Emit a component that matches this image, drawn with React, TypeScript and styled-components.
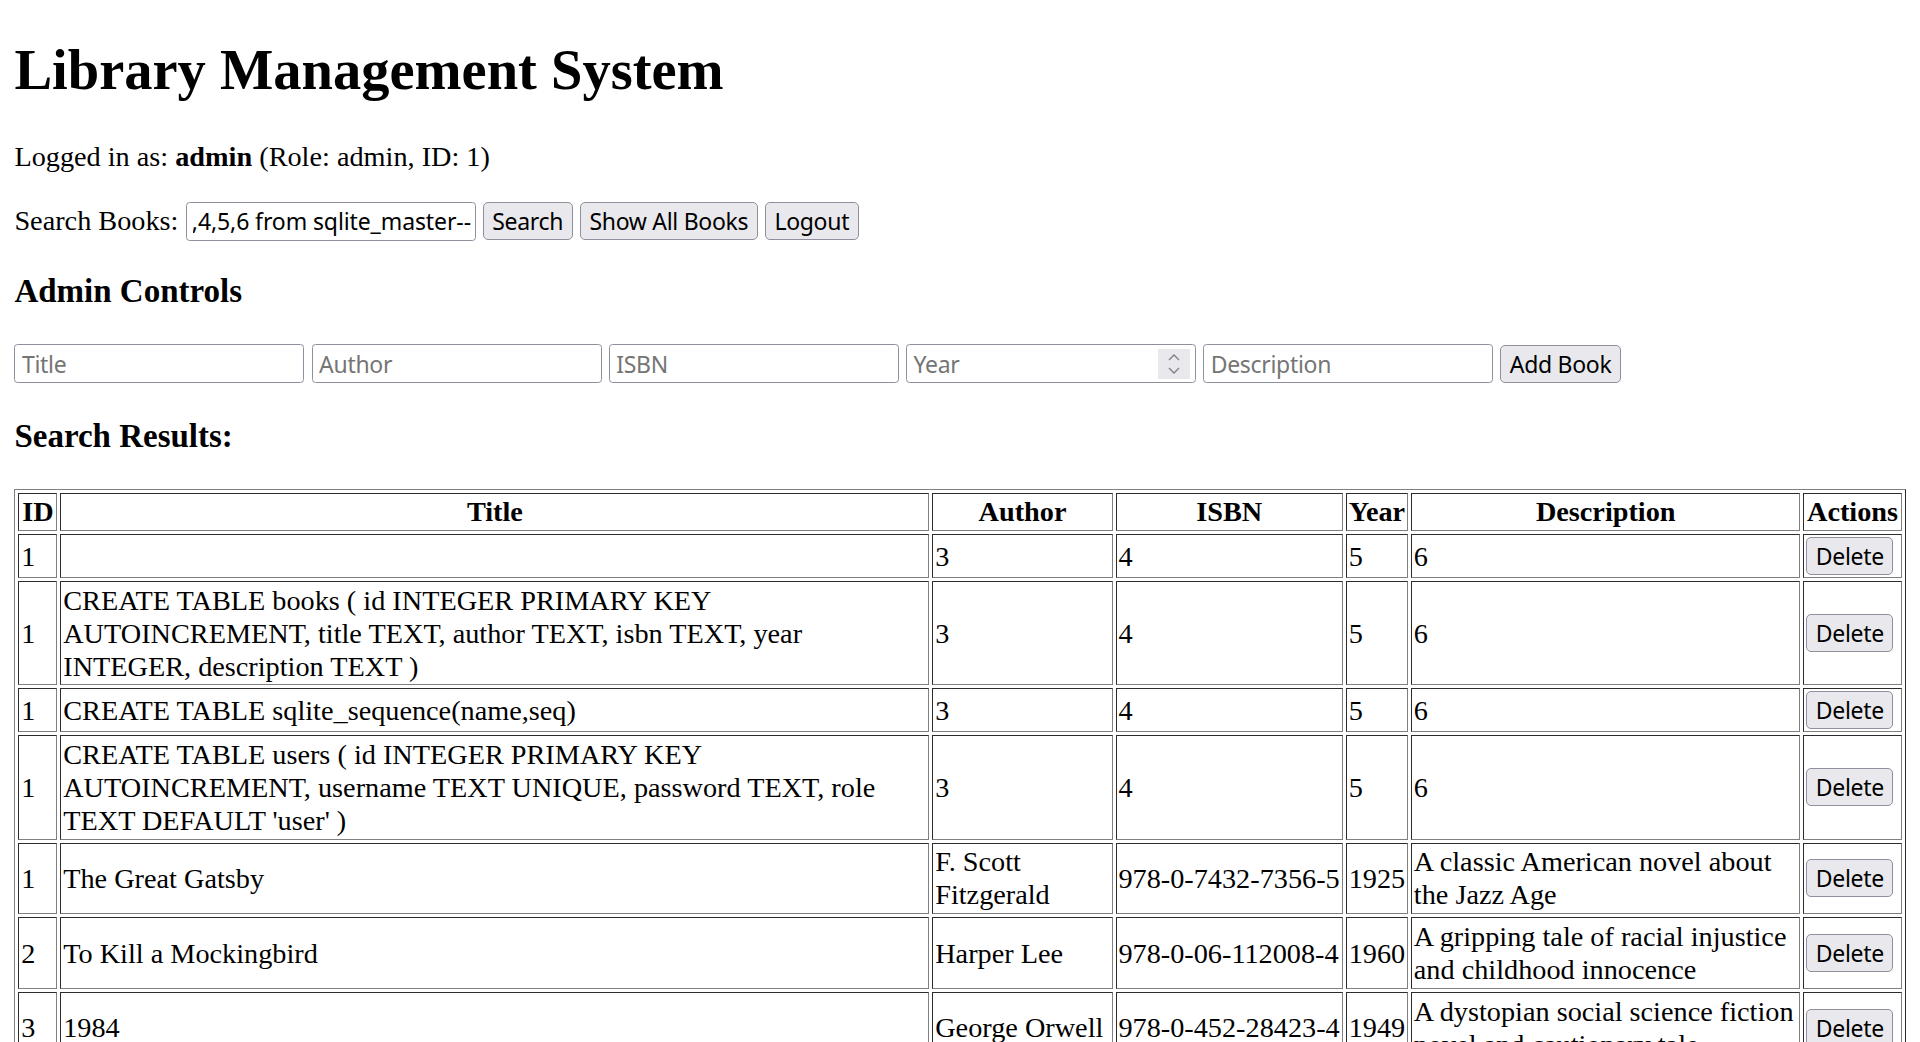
import { useEffect, useRef } from "react"
import styled, { createGlobalStyle } from "styled-components"

const GlobalStyle = createGlobalStyle`
  html {
    scrollbar-width: none;
  }
  body {
    margin: 0 14.4px 14.4px;
    background: #fff;
    color: #000;
    font-family: "Liberation Serif", "Times New Roman", serif;
    font-size: 28.25px;
    line-height: 31.9px;
  }
`

const Title = styled.h1`
  font-size: 56.5px;
  line-height: 63.8px;
  font-weight: bold;
  margin: 38.6px 0;
`

const Info = styled.p`
  margin: 28.8px 0;
`

const SearchRow = styled.form`
  display: flex;
  align-items: center;
  gap: 7.2px;
  margin: 28.8px 0;
`

const SectionTitle = styled.h3`
  font-size: 33px;
  line-height: 37.3px;
  font-weight: bold;
  margin: 32.5px 0 33.7px;
`

const AddRow = styled.div`
  display: flex;
  align-items: center;
  gap: 7.2px;
  padding-bottom: 2px;
`

const Input = styled.input`
  box-sizing: border-box;
  width: 290px;
  height: 39px;
  padding: 1.8px 3.6px 1.8px 6.5px;
  border: 1px solid #8f8f9d;
  border-radius: 3.6px;
  background: #fff;
  color: #000;
  font-family: "Noto Sans", "Segoe UI", sans-serif;
  font-size: 23px;
  letter-spacing: -0.3px;
  outline: none;

  &::placeholder {
    color: #757575;
  }
`

const SearchInput = styled(Input)`
  letter-spacing: -0.1px;
`

const YearBox = styled.div`
  box-sizing: border-box;
  display: flex;
  align-items: stretch;
  width: 290px;
  height: 39px;
  padding: 3.6px 5px 3.6px 0;
  border: 1px solid #8f8f9d;
  border-radius: 3.6px;
  background: #fff;
`

const YearInput = styled(Input)`
  flex: 1;
  min-width: 0;
  width: 0;
  height: auto;
  border: none;
  border-radius: 0;
  padding: 0 3.6px 0 6.5px;
`

const Spinner = styled.div`
  flex: none;
  width: 32px;
  background: #e9e9ed;
  display: flex;
  flex-direction: column;
  align-items: center;
  justify-content: center;
  gap: 6px;
`

const Button = styled.button`
  box-sizing: border-box;
  height: 38px;
  padding: 1.8px 8.5px;
  border: 1px solid #8f8f9d;
  border-radius: 5px;
  background: #e9e9ed;
  color: #000;
  font-family: "Noto Sans", "Segoe UI", sans-serif;
  font-size: 23px;
  letter-spacing: -0.3px;
  white-space: nowrap;
  cursor: pointer;
`

const Table = styled.table`
  width: 100%;
  border-collapse: separate;
  border-spacing: 3.6px;
  border: 1px outset #808080;
`

const Th = styled.th<{ $w: number }>`
  box-sizing: border-box;
  width: ${(p) => p.$w}px;
  border: 1px inset #808080;
  padding: 1.8px;
  line-height: 33px;
  font-weight: bold;
  text-align: center;
  vertical-align: middle;
`

const Td = styled.td`
  border: 1px inset #808080;
  padding: 1.8px;
  line-height: 33px;
  text-align: left;
  vertical-align: middle;
`

type Book = {
  id: number
  title: string
  author: string
  isbn: string
  year: string
  description: string
}

const columns = [
  { label: "ID", w: 39 },
  { label: "Title", w: 868 },
  { label: "Author", w: 180 },
  { label: "ISBN", w: 227 },
  { label: "Year", w: 62 },
  { label: "Description", w: 389 },
  { label: "Actions", w: 98 },
]

const books: Book[] = [
  { id: 1, title: "", author: "3", isbn: "4", year: "5", description: "6" },
  {
    id: 1,
    title:
      "CREATE TABLE books ( id INTEGER PRIMARY KEY AUTOINCREMENT, title TEXT, author TEXT, isbn TEXT, year INTEGER, description TEXT )",
    author: "3",
    isbn: "4",
    year: "5",
    description: "6",
  },
  { id: 1, title: "CREATE TABLE sqlite_sequence(name,seq)", author: "3", isbn: "4", year: "5", description: "6" },
  {
    id: 1,
    title:
      "CREATE TABLE users ( id INTEGER PRIMARY KEY AUTOINCREMENT, username TEXT UNIQUE, password TEXT, role TEXT DEFAULT 'user' )",
    author: "3",
    isbn: "4",
    year: "5",
    description: "6",
  },
  {
    id: 1,
    title: "The Great Gatsby",
    author: "F. Scott Fitzgerald",
    isbn: "978-0-7432-7356-5",
    year: "1925",
    description: "A classic American novel about the Jazz Age",
  },
  {
    id: 2,
    title: "To Kill a Mockingbird",
    author: "Harper Lee",
    isbn: "978-0-06-112008-4",
    year: "1960",
    description: "A gripping tale of racial injustice and childhood innocence",
  },
  {
    id: 3,
    title: "1984",
    author: "George Orwell",
    isbn: "978-0-452-28423-4",
    year: "1949",
    description: "A dystopian social science fiction novel and cautionary tale",
  },
]

function Chevron({ up }: { up?: boolean }) {
  return (
    <svg width="12" height="7" viewBox="0 0 12 7">
      <polyline
        points={up ? "1,6 6,1 11,6" : "1,1 6,6 11,1"}
        fill="none"
        stroke="#7d7d85"
        strokeWidth="1.3"
      />
    </svg>
  )
}

function App() {
  const searchRef = useRef<HTMLInputElement>(null)

  useEffect(() => {
    const el = searchRef.current
    if (el) el.scrollLeft = el.scrollWidth
  }, [])

  return (
    <>
      <GlobalStyle />
      <Title>Library Management System</Title>
      <Info>
        Logged in as: <strong>admin</strong> (Role: admin, ID: 1)
      </Info>

      <SearchRow onSubmit={(e) => e.preventDefault()}>
        <span>Search Books:</span>
        <SearchInput
          ref={searchRef}
          type="text"
          defaultValue="' UNION SELECT 1,sql,3,4,5,6 from sqlite_master--"
        />
        <Button type="submit">Search</Button>
        <Button type="button">Show All Books</Button>
        <Button type="button">Logout</Button>
      </SearchRow>

      <SectionTitle>Admin Controls</SectionTitle>
      <AddRow>
        <Input type="text" placeholder="Title" />
        <Input type="text" placeholder="Author" />
        <Input type="text" placeholder="ISBN" />
        <YearBox>
          <YearInput type="text" placeholder="Year" />
          <Spinner>
            <Chevron up />
            <Chevron />
          </Spinner>
        </YearBox>
        <Input type="text" placeholder="Description" />
        <Button type="button">Add Book</Button>
      </AddRow>

      <SectionTitle>Search Results:</SectionTitle>
      <Table>
        <thead>
          <tr>
            {columns.map((c) => (
              <Th key={c.label} $w={c.w}>
                {c.label}
              </Th>
            ))}
          </tr>
        </thead>
        <tbody>
          {books.map((b, i) => (
            <tr key={i}>
              <Td>{b.id}</Td>
              <Td>{b.title}</Td>
              <Td>{b.author}</Td>
              <Td>{b.isbn}</Td>
              <Td>{b.year}</Td>
              <Td>{b.description}</Td>
              <Td>
                <Button type="button">Delete</Button>
              </Td>
            </tr>
          ))}
        </tbody>
      </Table>
    </>
  )
}

export default App
